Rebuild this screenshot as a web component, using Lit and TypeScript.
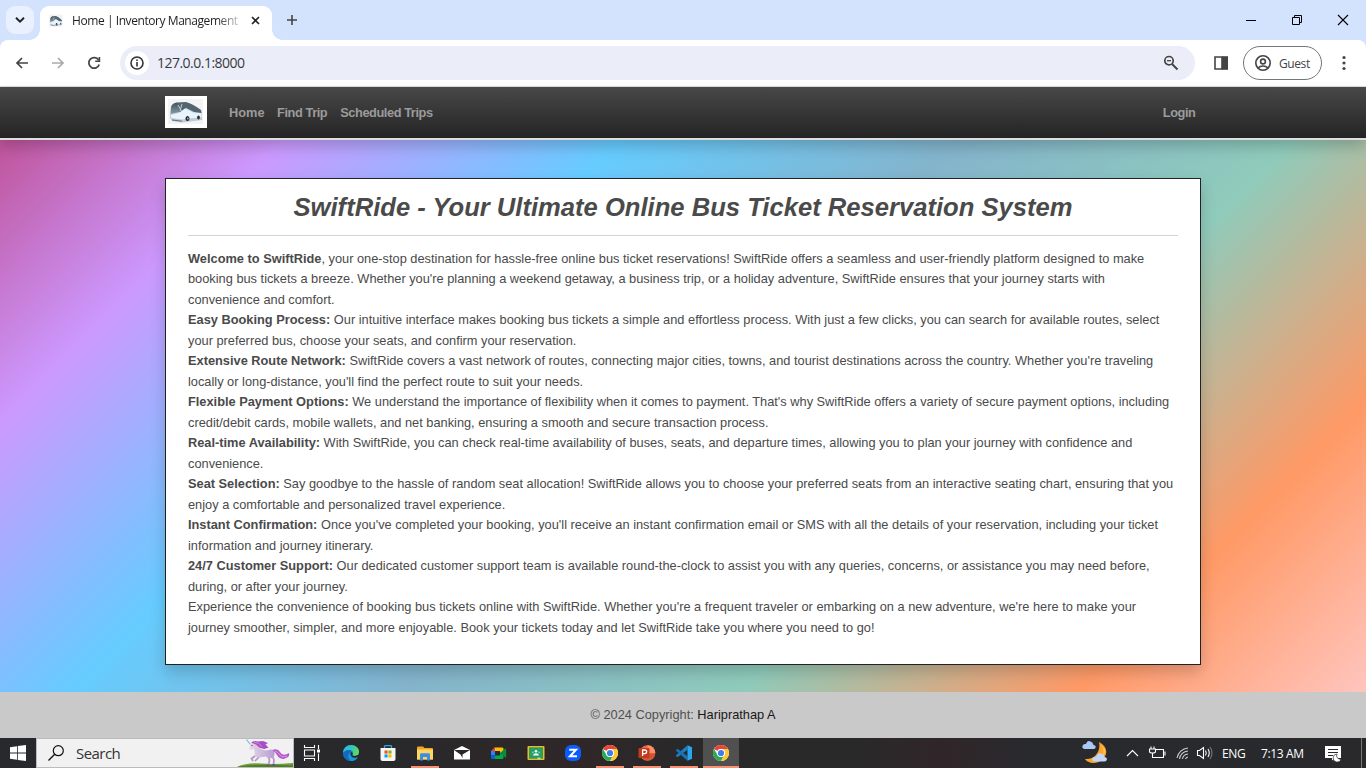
import { LitElement, html, css, svg } from "lit";
import { customElement } from "lit/decorators.js";

const bus = (cls: string) => html`<svg class=${cls} viewBox="0 0 42 32" preserveAspectRatio="none">
  <defs>
    <linearGradient id="bd" x1="0" y1="0" x2="0" y2="1"><stop offset="0" stop-color="#dbe6ef"/><stop offset="1" stop-color="#b4c8da"/></linearGradient>
    <linearGradient id="bg" x1="0" y1="0" x2="0" y2="1"><stop offset="0" stop-color="#3f515d"/><stop offset="1" stop-color="#8b9ba5"/></linearGradient>
  </defs>
  <rect width="42" height="32" fill="#fff"/><rect x="3" y="3" width="35" height="25" fill="#f4f4f4"/>
  <path d="M5 21 17 25 37 22V24L17 26.500 7 25z" fill="#c5c7c9"/>
  <path d="M5 19 6 11Q7 7 12 6.500L21 6Q28 8 36 14L37 16V22L33 23.500 18 25 8 24 5 22z" fill="url(#bd)"/>
  <path d="M5.500 18 6 11Q7 7 12 6.500L17 9 15 16z" fill="url(#bg)"/>
  <path d="M12 6.500 21 6Q28 8 36 14L36.500 17 29 16 21 12 15 16z" fill="#53656f"/>
  <path d="M13 9 17 16M17 8 15 15" stroke="#c5d0d8" stroke-width="1"/>
  <path d="M6 19 15 16.500 20 12.500 28 16.500 36.500 17.500V21L17 23.500 6 22z" fill="#e9f3fc"/>
  <ellipse cx="22.500" cy="22.500" rx="2" ry="2.500" fill="#23292e"/><ellipse cx="33.500" cy="21.500" rx="1.300" ry="2" fill="#23292e"/><circle cx="22.800" cy="22.500" r=".9" fill="#aaa"/>
  <path d="M7 24 17 25.200" stroke="#555" stroke-width=".8"/>
</svg>`;

const chrome = svg`<circle cx="8" cy="8" r="8" fill="#fff"/>
  <path d="M1.070 4A8 8 0 0 1 14.930 4H8A4 4 0 0 0 4.540 6z" fill="#e94435"/>
  <path d="M1.070 4A8 8 0 0 0 8 16L11.460 10A4 4 0 0 1 4.540 10z" fill="#2da94f"/><path d="M14.930 4A8 8 0 0 1 8 16L11.460 10A4 4 0 0 0 8 4z" fill="#fcc934"/>
  <circle cx="8" cy="8" r="4" fill="#fff"/><circle cx="8" cy="8" r="3.100" fill="#3f7ee8"/>`;

const apps = [
  { w: "first", art: svg`<path d="M.5 0v2.500h10V0M.5 16v-2.500h10V16M.5 5h10v6H.5zM14.500 0v4M14.500 8.500V16" fill="none" stroke="#fff" stroke-width="1.100"/><rect x="13" y="4.500" width="3" height="3" fill="#fff"/>` },
  { w: "", art: svg`<defs><linearGradient id="ea" x1="0" y1="0" x2="1" y2=".4"><stop offset="0" stop-color="#25b6ea"/><stop offset=".6" stop-color="#35c7b4"/><stop offset="1" stop-color="#62d957"/></linearGradient></defs>
    <circle cx="8" cy="8" r="8" fill="#1680d4"/><path d="M0 8A8 8 0 0 1 8 0C12.500 0 16 3 16 6.500 16 9.500 14 11 11.500 11 9.500 11 9 10 9.700 9 10.700 7 9.300 5 6.500 5 3 5 .5 7 0 8z" fill="url(#ea)"/><path d="M6.500 5C3 5 0 7 0 9.500 1 14 5 16 8 16 4.800 13.500 4.200 8.500 8 6.800 7.800 5.600 7.300 5 6.500 5z" fill="#1269bd"/><path d="M8 7C5.500 9 7.500 13 11.500 13 13.500 13 15 12.200 15 12.200 13 15.300 10 16 8 16 4.800 13.500 4.200 8.500 8 7z" fill="#1597dc"/><path d="M8.200 7C6.500 9.300 8.500 12.700 12 12.700L15 12 16.500 9.500 12 11C9.500 11 8.800 10 9.700 9 9.900 8 9 7.500 8.200 7z" fill="#2a2727"/>` },
  { w: "", art: svg`<path d="M4.500 4V1.500Q4.500.7 5.300.7h5.400q.8 0 .8.800V4" fill="none" stroke="#2ba7e8" stroke-width="1.300"/><path d="M.5 3h15v11q0 2-2 2h-11q-2 0-2-2z" fill="#f4f4f4"/><path d="M4.500 5.500H7.600V8.600H4.500z" fill="#f25022"/><path d="M8.400 5.500h3.100v3.100H8.400z" fill="#7fba00"/><path d="M4.500 9.400h3.100v3.100H4.500z" fill="#00a4ef"/><path d="M8.400 9.400h3.100v3.100H8.400z" fill="#ffb900"/>` },
  { w: "on", art: svg`<path d="M0 2.500Q0 1.500 1 1.500H6L7.500 3H15q1 0 1 1V14.500H0z" fill="#f0a81c"/><path d="M0 4.500H16V14.500H0z" fill="#ffd666"/><path d="M3 15.500V9.500Q3 8.300 4.200 8.300h7.600q1.200 0 1.200 1.200v6H10V12.500Q10 12 9.500 12h-3Q6 12 6 12.500v3z" fill="#3d8fe0"/>` },
  { w: "", art: svg`<path d="M0 5 8 1 16 5V14.500H0z" fill="#fff"/><path d="M0 5H16L8.500 9.500V13L6.500 9.500z" fill="#2a2727"/>` },
  { w: "", art: svg`<path d="M3.500 2.500H11.500Q12.500 2.500 12.500 4V6L9 8V6H3.500z" fill="#fbbc04"/><path d="M4 2V6H0z" fill="#ea4335"/><path d="M0 6H4V10.500H0z" fill="#2684fc"/><path d="M0 10.500H4V14H1.300Q0 14 0 12.700z" fill="#0066da"/><path d="M4 10.500H9V8L12.500 10.500V12.500Q12.500 14 11 14H4z" fill="#00ac47"/><path d="M9 8 14 3.700Q15.200 3 15.200 4.500V12Q15.200 13.200 14 12.300z" fill="#0b8a3e"/>` },
  { w: "", art: svg`<rect x="-.5" y="1" width="17" height="14" rx="1" fill="#f5b81f"/><rect x="1" y="2.300" width="14" height="11.400" fill="#24a065"/><circle cx="8" cy="6.300" r="1.300" fill="#fff"/><circle cx="4.800" cy="7.300" r=".9" fill="#87cdab"/><circle cx="11.200" cy="7.300" r=".9" fill="#87cdab"/><path d="M5 10.500Q5.300 8.300 8 8.300t3 2.200z" fill="#fff"/><path d="M9.500 12.700h3v1h-3z" fill="#dff"/>` },
  { w: "", art: svg`<rect width="16" height="16" rx="6" fill="#0b5cff"/><path d="M4.200 4.800H11L5 11.200H12" fill="none" stroke="#fff" stroke-width="2"/>` },
  { w: "on", art: chrome },
  { w: "on", art: svg`<circle cx="8.500" cy="8" r="7.800" fill="#ed6c47"/><path d="M8.500.2A7.800 7.800 0 0 1 16.300 8H8.500z" fill="#ff8f6b"/><path d="M.8 8.500H16.200A7.800 7.800 0 0 1 .8 8.500z" fill="#d35230"/><rect x="-.5" y="3" width="11" height="10" rx="1" fill="#c13b1b"/><path d="M3.600 11V5H6Q7.700 5.200 7.700 6.800T6 8.700H3.600" fill="none" stroke="#fff" stroke-width="1.300"/>` },
  { w: "on", art: svg`<path d="M11.500.3V4.800L1.500 12.200 0 11V10.300z" fill="#1b7fc4"/><path d="M11.500 15.700V11.200L1.500 3.800 0 5V5.700z" fill="#1673b5"/><path d="M11.500.3 16 2.200V13.800L11.500 15.700z" fill="#2ba5f0"/>` },
  { w: "on cur", art: chrome },
];

const copy: [string, string[]][] = [
  ["Welcome to SwiftRide", [", your one-stop destination for hassle-free online bus ticket reservations! SwiftRide offers a seamless and user-friendly platform designed to make", "booking bus tickets a breeze. Whether you're planning a weekend getaway, a business trip, or a holiday adventure, SwiftRide ensures that your journey starts with", "convenience and comfort."]],
  ["Easy Booking Process:", [" Our intuitive interface makes booking bus tickets a simple and effortless process. With just a few clicks, you can search for available routes, select", "your preferred bus, choose your seats, and confirm your reservation."]],
  ["Extensive Route Network:", [" SwiftRide covers a vast network of routes, connecting major cities, towns, and tourist destinations across the country. Whether you're traveling", "locally or long-distance, you'll find the perfect route to suit your needs."]],
  ["Flexible Payment Options:", [" We understand the importance of flexibility when it comes to payment. That's why SwiftRide offers a variety of secure payment options, including", "credit/debit cards, mobile wallets, and net banking, ensuring a smooth and secure transaction process."]],
  ["Real-time Availability:", [" With SwiftRide, you can check real-time availability of buses, seats, and departure times, allowing you to plan your journey with confidence and", "convenience."]],
  ["Seat Selection:", [" Say goodbye to the hassle of random seat allocation! SwiftRide allows you to choose your preferred seats from an interactive seating chart, ensuring that you", "enjoy a comfortable and personalized travel experience."]],
  ["Instant Confirmation:", [" Once you've completed your booking, you'll receive an instant confirmation email or SMS with all the details of your reservation, including your ticket", "information and journey itinerary."]],
  ["24/7 Customer Support:", [" Our dedicated customer support team is available round-the-clock to assist you with any queries, concerns, or assistance you may need before,", "during, or after your journey."]],
  ["", ["Experience the convenience of booking bus tickets online with SwiftRide. Whether you're a frequent traveler or embarking on a new adventure, we're here to make your", "journey smoother, simpler, and more enjoyable. Book your tickets today and let SwiftRide take you where you need to go!"]],
];

@customElement("app-root")
export class AppRoot extends LitElement {
  static styles = css`
    :host { display: flex; flex-direction: column; width: 1366px; height: 768px; overflow: hidden; font-family: "Open Sans", sans-serif; }
    * { box-sizing: border-box; }
    svg { display: block; flex: none; overflow: visible; }
    .tabs { height: 40px; background: #d3e3fd; display: flex; }
    .drop { width: 28px; height: 28px; border-radius: 9px; background: #e9f1fe; margin: 6px 6px 0; display: grid; place-items: center; }
    .tab { width: 232px; height: 34px; margin-top: 6px; background: #fff; border-radius: 9px 9px 0 0; display: flex; align-items: center; padding: 0 10px 5px 8px; position: relative; }
    .tab::before, .tab::after { content: ""; position: absolute; bottom: 0; width: 10px; height: 10px; }
    .tab::before { left: -10px; background: radial-gradient(circle at 0 0, transparent 9.5px, #fff 10px); }
    .tab::after { right: -10px; background: radial-gradient(circle at 100% 0, transparent 9.5px, #fff 10px); }
    .fav { width: 16px; height: 16px; }
    .name { width: 168px; margin-left: 8px; font-size: 12px; line-height: 18px; white-space: nowrap; color: #1f1f1f; letter-spacing: -.43px; -webkit-mask-image: linear-gradient(90deg, #000 144px, rgba(0,0,0,.2) 168px); mask-image: linear-gradient(90deg, #000 144px, rgba(0,0,0,.2) 168px); }
    .x { margin-left: 11px; }
    .plus { margin: 14px 0 0 14px; }
    .win { margin: 14px 16px 0 auto; }
    .bar { height: 47px; background: #fff; display: flex; align-items: center; padding-left: 14px; border-bottom: 1px solid #dcdcdc; border-radius: 8px 8px 0 0; }
    .frame { background: #d3e3fd; }
    .tools { display: flex; gap: 20px; margin-right: 18px; }
    .omni { width: 1075px; height: 34px; border-radius: 17px; background: #ebeef8; display: flex; align-items: center; padding: 0 16px 0 5px; }
    .info { width: 24px; height: 24px; border-radius: 50%; background: #fff; display: grid; place-items: center; margin-right: 8px; }
    .url { font-size: 14px; line-height: 18px; margin-bottom: 1px; color: #3a3a3c; letter-spacing: -.52px; flex: 1; }
    .side { margin: 0 14px 0 18px; }
    .guest { width: 79px; height: 34px; border: 1px solid #747775; border-radius: 17px; display: flex; align-items: center; padding-left: 11px; gap: 8px; font-size: 12px; color: #444; letter-spacing: -.4px; }
    .dots { margin-left: 20px; }
    .page { height: 651px; display: flex; flex-direction: column; align-items: center; font-family: "Liberation Sans", Arial, sans-serif; background: linear-gradient(135deg, #bd4788 0%, #cc99ff 16.67%, #66ccff 33.33%, #84b4cc 50%, #8fcbbb 66.67%, #ff9966 83.33%, #ffcccc 100%); }
    .nav { width: 100%; height: 53px; flex: none; background: linear-gradient(#484848, #242424) padding-box; border-bottom: 2px solid #dedede; display: flex; align-items: center; padding: 0 170.5px 0 165px; font-size: 12.8px; font-weight: bold; color: #9b9b9b; letter-spacing: -.43px; box-shadow: 0 7px 13px rgba(0,0,0,.19); }
    .logo { width: 42px; height: 32px; margin: -1px 22px 0 0; }
    .link { margin-right: 13px; }
    .here { letter-spacing: 0; margin-right: 12.5px; }
    .end { margin-left: auto; }
    .card { width: 1036px; height: 487px; margin-top: 38px; flex: none; background: #fff; border: 1px solid #222; padding: 0 22px; color: #4a4a4a; box-shadow: 0 7px 14px rgba(0,0,0,.18); }
    .title { margin: 0; height: 57px; line-height: 56px; border-bottom: 1px solid #d4d4d4; text-align: center; font-size: 25.6px; font-style: italic; font-weight: bold; white-space: nowrap; }
    .text { margin-top: 12.7px; font-size: 12.8px; line-height: 20.5px; white-space: pre; }
    .foot { width: 100%; height: 46px; margin-top: auto; background: #c9c9c9; color: #505050; font-size: 12.8px; text-align: center; line-height: 45px; }
    .foot b { font-weight: normal; color: #181818; }
    .task { height: 30px; background: linear-gradient(90deg, #27292c 0, #29292b 30%, #302627 42%, #29292a 50%, #29292a 62%, #302629 69%, #282a2e 76%, #29292c 100%); display: flex; align-items: center; color: #fff; }
    .start { width: 36px; display: grid; place-items: center; }
    .search { width: 258px; height: 30px; background: #f1f1f1; border: 1px solid #bcbcbc; display: flex; align-items: center; color: #333; font-size: 15px; letter-spacing: -.55px; padding-left: 11px; }
    .search span { margin-left: 12px; margin-right: auto; }
    .app { width: 37px; height: 30px; display: flex; flex-direction: column; align-items: center; padding-top: 7px; }
    .app.first { width: 38px; padding-right: 2px; }
    .app.on::after { content: ""; width: 28px; height: 2px; background: #fa8f71; margin-top: 5px; flex: none; }
    .app.cur { background: #505050; width: 36px; margin-left: 1px; }
    .app.cur::after { width: 36px; }
    .tray { margin-left: auto; display: flex; align-items: center; font-size: 12px; white-space: nowrap; }
    .lang { margin-left: 10px; width: 39px; letter-spacing: -.4px; }
    .time { width: 64px; letter-spacing: -.35px; }
    .edge { width: 1px; height: 30px; background: #777; margin: 0 4px 0 19px; }
  `;

  render() {
    return html`
      <div class="tabs">
        <div class="drop"><svg width="10" height="6"><path d="M1 .7 5 4.600 9 .7" fill="none" stroke="#202124" stroke-width="1.900"/></svg></div>
        <div class="tab">${bus("fav")}<span class="name">Home | Inventory Management</span>
          <svg class="x" width="9" height="9"><path d="M1 1 8 8M8 1 1 8" stroke="#222" stroke-width="1.600"/></svg></div>
        <svg class="plus" width="12" height="12"><path d="M6 1V11M1 6H11" stroke="#444" stroke-width="1.600"/></svg>
        <svg class="win" width="104" height="12"><g fill="none" stroke="#000"><path d="M0 6.500H10"/><path d="M46.500 3.500H53.500V10.500H46.500zM48.500 3.500V1.500H55.500V8.500H53.500"/><path d="M92 1 102 11M102 1 92 11" stroke-width="1.100"/></g></svg>
      </div>
      <div class="frame"><div class="bar">
        <div class="tools">
          <svg width="16" height="16"><path d="M14 8H3M8 3 3 8 8 13" fill="none" stroke="#444" stroke-width="1.700"/></svg>
          <svg width="16" height="16"><path d="M2 8H13M8 3 13 8 8 13" fill="none" stroke="#aaa" stroke-width="1.700"/></svg>
          <svg width="16" height="16"><path d="M12.600 5A5.300 5.300 0 1 0 13.200 9.500" fill="none" stroke="#444" stroke-width="1.700"/><path d="M14.200 2V7H9.200V5.500H12.600V2z" fill="#444"/></svg>
        </div>
        <div class="omni">
          <div class="info"><svg width="14" height="14"><circle cx="7" cy="7" r="6" fill="none" stroke="#333" stroke-width="1.600"/><path d="M7 6V10.400M7 3.500V5" stroke="#333" stroke-width="1.600"/></svg></div>
          <span class="url">127.0.0.1:8000</span>
          <svg width="16" height="16"><circle cx="6" cy="5.700" r="4.200" fill="none" stroke="#444" stroke-width="1.700"/><path d="M4 5.700H8" stroke="#444" stroke-width="1.300"/><path d="M9 9 14.500 14.500" stroke="#444" stroke-width="2"/></svg>
        </div>
        <svg class="side" width="16" height="16"><path d="M2 2H9V14H2z" fill="none" stroke="#444" stroke-width="1.600"/><path d="M9 1.200H15V14.800H9z" fill="#444"/></svg>
        <div class="guest"><svg width="16" height="16"><g fill="none" stroke="#444" stroke-width="1.600"><circle cx="8" cy="8" r="7.200"/><circle cx="8" cy="6.500" r="2.400"/><path d="M3 13Q5 11 8 11t5 2"/></g></svg><span>Guest</span></div>
        <svg class="dots" width="4" height="16" fill="#444"><circle cx="2" cy="2.500" r="1.600"/><circle cx="2" cy="8" r="1.600"/><circle cx="2" cy="13.500" r="1.600"/></svg>
      </div></div>
      <div class="page">
        <div class="nav">${bus("logo")}<span class="link here">Home</span><span class="link">Find Trip</span><span class="link">Scheduled Trips</span><span class="end">Login</span></div>
        <div class="card">
          <h1 class="title">SwiftRide - Your Ultimate Online Bus Ticket Reservation System</h1>
          <div class="text">${copy.map(([lead, lines]) => html`<div><b>${lead}</b>${lines.map((l, i) => html`${i ? html`<br>` : ""}${l}`)}</div>`)}</div>
        </div>
        <div class="foot">© 2024 Copyright: <b>Hariprathap A</b></div>
      </div>
      <div class="task">
        <div class="start"><svg width="16" height="16" fill="#fff"><path d="M0 2.300 7 1.300V7.600H0zM7.800 1.100 16 0V7.600H7.800zM0 8.400H7V14.700L0 13.700zM7.800 8.400H16V16L7.800 14.900z"/></svg></div>
        <div class="search"><svg width="16" height="16"><circle cx="10.300" cy="5.700" r="5" fill="none" stroke="#111" stroke-width="1.200"/><path d="M6.700 9.300.5 15.500" stroke="#111" stroke-width="1.300"/></svg><span>Search</span>
          <svg width="56" height="28" viewBox="0 0 56 28">
            <defs><linearGradient id="uh"><stop stop-color="#e6d8ec"/><stop offset="1" stop-color="#b79ccf"/></linearGradient></defs>
            <path d="M0 28Q9 23.500 24 24.500T56 24V28z" fill="#6d9e37"/><path d="M0 28Q18 24.500 56 26.500V28z" fill="#4f7e2a"/>
            <path d="M35 11Q41 9 43 13T50 15L52 14Q53 18 49 19L47 20Q42 20 40 16T35 13z" fill="#b45cce"/><path d="M38 12Q41 13 43 16T50 17" stroke="#e092dd" fill="none"/>
            <path d="M18 17 14.500 19.500 16 22M22 18 18 22M31 17 32.500 21 31.500 26M35 16 37 21 36.500 25.500" fill="none" stroke="#b493cb" stroke-width="1.700"/>
            <path d="M12 5.500 16 3.500 20 5 23 10 29 11.500 34 10.500Q38 11 37.500 16L36 19H31L29 17.500 23 18.500 18 18 17.500 12 16.500 9.500 13.500 11 12 9.500 13.500 7.500z" fill="url(#uh)"/>
            <path d="M14 3.500Q17 1 21 2.500L26 2 31 4 28.500 5.500 31.500 8.500 27.500 10 23 9 19 5.500z" fill="#a94fc6"/><path d="M17 3Q22 3.500 25 7.500" fill="none" stroke="#dc86dc"/>
            <path d="M9.500 .5 13 5" stroke="#70c2d6" stroke-width="1.200"/><circle cx="15" cy="6.500" r=".6" fill="#423"/>
            <path d="M30 25.500h2.500v1.500h-2.500zM35.500 25h2.500v1.500h-2.500z" fill="#70468f"/>
          </svg></div>
        ${apps.map(a => html`<div class="app ${a.w}"><svg width="16" height="16" viewBox="0 0 16 16">${a.art}</svg></div>`)}
        <div class="tray">
          <svg width="130" height="26" viewBox="0 0 130 26"><path d="M17 2C25 6 27 14 20 20 14 25 5 23 3 19 13 20 19 11 17 2z" fill="#f9a42b"/><path d="M18 4Q25 12 18 20 24 15 23 9z" fill="#ffc34e"/>
            <path d="M2.500 9Q-1 8 1 5 2 3.500 4 4 5 0 8.500 1.500 11 2 11.500 5 15 5.500 13 8.500 12.500 9 10.500 9z" fill="#a9c8f4"/><path d="M13 21.500Q9 21 10.500 18 12 16.500 14 17 15.500 12 19.500 13.500 21.500 14 22.500 17 26 17.500 24.500 20.500 24 21.500 22 21.500z" fill="#c0d5f7"/>
            <g fill="none" stroke="#fff" stroke-width="1.100"><path d="M45 16 50.500 10.500 56 16"/><path d="M73.500 9.500H81.500V17.500H73M83 11.500V15.500M67.500 9H73.500V11.500Q73.500 13 70.500 13T67.500 11.500zM69 6.500V9M72 6.500V9M70.500 13V17.500H74"/>
            <path d="M95 18A12 12 0 0 1 106 8M97.500 19A9 9 0 0 1 106 11M100.300 19A6.500 6.500 0 0 1 106 14M103.500 19A3 3 0 0 1 106 17" stroke="#d0d0d0"/>
            <path d="M115.500 10.500H117.500L121.500 7.500V18.500L117.500 15.500H115.500zM123.500 10.500Q125 13 123.500 15.500M126 9Q128.500 13 126 17"/><path d="M128 7Q132 13 128 19" stroke="#777"/></g></svg>
          <span class="lang">ENG</span><span class="time">7:13 AM</span>
          <svg width="17" height="17"><path d="M0 1H16V13H10L7 15.500V13H0z" fill="#fff"/><path d="M3 4.500H13M3 7.500H13M3 10.500H8" stroke="#29292b"/><path d="M12 9A4 4 0 1 0 16 14 3.500 3.500 0 0 1 12 9z" fill="#fff" stroke="#29292b" stroke-width=".7"/></svg>
          <i class="edge"></i>
        </div>
      </div>`;
  }
}
